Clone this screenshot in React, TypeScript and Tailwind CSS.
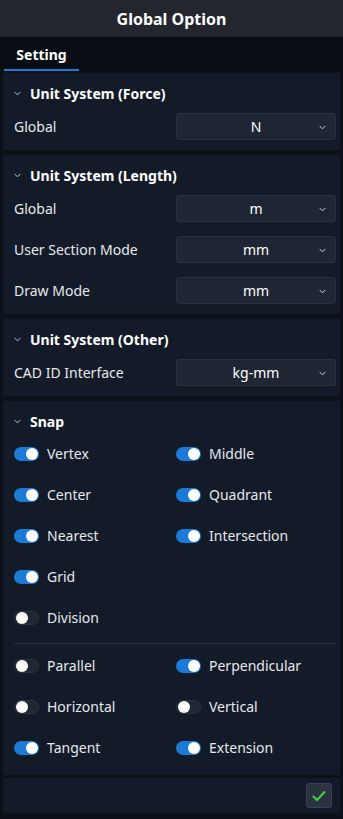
import React from 'react';

const font = { fontFamily: '"Noto Sans", "Open Sans", sans-serif' };

const Chevron = ({ className = '' }: { className?: string }) => (
  <svg viewBox="0 0 8 5" width="7" height="5" className={className} fill="none">
    <path d="M1 1l3 3 3-3" stroke="currentColor" strokeWidth="1.1" strokeLinecap="round" strokeLinejoin="round" />
  </svg>
);

const SectionHeader = ({ title }: { title: string }) => (
  <div className="flex h-[20px] items-center">
    <Chevron className="text-[#c9ced6]" />
    <span className="ml-[9px] text-[14px] font-bold text-white">{title}</span>
  </div>
);

const SelectRow = ({ label, value }: { label: string; value: string }) => (
  <div className="flex h-[27px] items-center">
    <span className="flex-1 text-[14px] text-[#e6e8ec]">{label}</span>
    <div className="relative flex h-[27px] w-[160px] items-center justify-center rounded-[3px] border border-[#2a3241] bg-[#1e2533]">
      <span className="text-[14px] text-white">{value}</span>
      <Chevron className="absolute right-[9px] top-[11px] text-[#d5d9df]" />
    </div>
  </div>
);

const Toggle = ({ on }: { on: boolean }) => (
  <div
    className={
      on
        ? 'flex h-[14px] w-[25px] items-center justify-end rounded-full bg-[#1b7bd6] pr-[1px]'
        : 'flex h-[14px] w-[25px] items-center justify-start rounded-full border border-[#2c3443] bg-[#1f2634] pl-[1px]'
    }
  >
    <div className="h-[12px] w-[12px] rounded-full bg-white" />
  </div>
);

const SnapItem = ({ label, on }: { label: string; on: boolean }) => (
  <div className="flex h-[41px] items-center gap-[8px]">
    <Toggle on={on} />
    <span className="text-[14px] text-[#e6e8ec]">{label}</span>
  </div>
);

export default function App() {
  const snapTop: [string, boolean][] = [
    ['Vertex', true],
    ['Middle', true],
    ['Center', true],
    ['Quadrant', true],
    ['Nearest', true],
    ['Intersection', true],
    ['Grid', true],
  ];
  const snapBottom: [string, boolean][] = [
    ['Parallel', false],
    ['Perpendicular', true],
    ['Horizontal', false],
    ['Vertical', false],
    ['Tangent', true],
    ['Extension', true],
  ];

  return (
    <div style={font} className="flex h-[819px] w-[343px] flex-col bg-[#0b1019]">
      <div className="flex h-[38px] items-center justify-center border-b border-[#0a0d13] bg-[#23262e]">
        <span className="text-[16px] font-bold text-white">Global Option</span>
      </div>
      <div className="flex h-[33px] bg-[#090d14] pl-[4px]">
        <div className="flex w-[75px] items-center justify-center border-b-2 border-[#1b7bd6] pt-[2px]">
          <span className="text-[14px] font-bold text-white">Setting</span>
        </div>
      </div>

      <div className="flex flex-col gap-[5px] px-[3px] pt-[2px]">
        <div className="flex flex-col bg-[#131b28] pb-[10px] pl-[11px] pr-[4px] pt-[10px]">
          <SectionHeader title="Unit System (Force)" />
          <div className="mt-[10px] flex flex-col">
            <SelectRow label="Global" value="N" />
          </div>
        </div>

        <div className="flex flex-col bg-[#131b28] pb-[10px] pl-[11px] pr-[4px] pt-[10px]">
          <SectionHeader title="Unit System (Length)" />
          <div className="mt-[10px] flex flex-col gap-[14px]">
            <SelectRow label="Global" value="m" />
            <SelectRow label="User Section Mode" value="mm" />
            <SelectRow label="Draw Mode" value="mm" />
          </div>
        </div>

        <div className="flex flex-col bg-[#131b28] pb-[10px] pl-[11px] pr-[4px] pt-[10px]">
          <SectionHeader title="Unit System (Other)" />
          <div className="mt-[10px] flex flex-col">
            <SelectRow label="CAD ID Interface" value="kg-mm" />
          </div>
        </div>

        <div className="flex flex-col bg-[#131b28] pb-[7px] pl-[11px] pr-[4px] pt-[10px]">
          <SectionHeader title="Snap" />
          <div className="mt-[2px] grid grid-cols-[162px_1fr]">
            {snapTop.map(([l, on]) => (
              <SnapItem key={l} label={l} on={on} />
            ))}
            <div />
            <SnapItem label="Division" on={false} />
          </div>
          <div className="mb-[1px] mt-[5px] h-px bg-[#2a3342]" />
          <div className="grid grid-cols-[162px_1fr]">
            {snapBottom.map(([l, on]) => (
              <SnapItem key={l} label={l} on={on} />
            ))}
          </div>
        </div>

        <div className="-mt-[2px] flex h-[35px] items-center justify-end bg-[#131b28] pr-[8px]">
          <div className="flex h-[25px] w-[26px] items-center justify-center rounded-[3px] border border-[#3a4352] bg-[#2b3341]">
            <svg viewBox="0 0 16 16" width="16" height="16" fill="none">
              <path d="M2.5 8.5l3.5 3.5 7.5-8" stroke="#4ccd4c" strokeWidth="2" strokeLinecap="round" strokeLinejoin="round" />
            </svg>
          </div>
        </div>
      </div>
    </div>
  );
}
